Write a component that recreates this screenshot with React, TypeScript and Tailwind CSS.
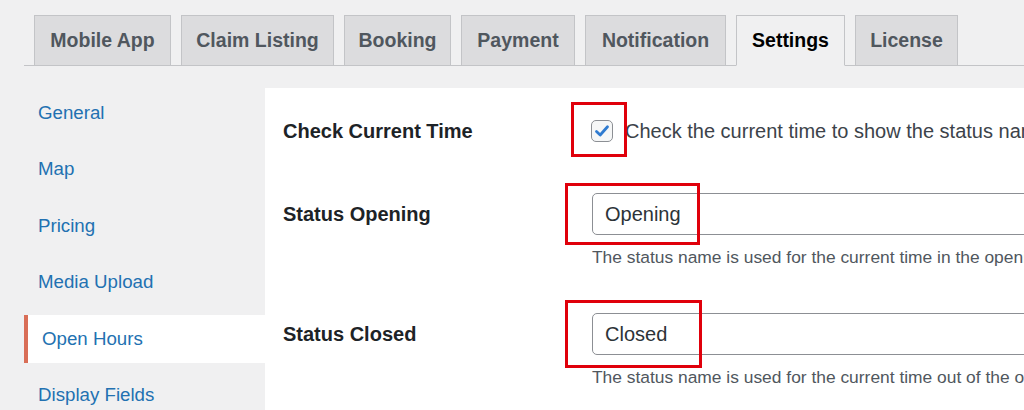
const tabs = [
  { label: "Mobile App", w: "w-[137px]" },
  { label: "Claim Listing", w: "w-[153px]" },
  { label: "Booking", w: "w-[107px]" },
  { label: "Payment", w: "w-[114px]" },
  { label: "Notification", w: "w-[141px]" },
  { label: "Settings", w: "w-[109px]", active: true },
  { label: "License", w: "w-[103px]" },
];

const menu = ["General", "Map", "Pricing", "Media Upload", "Open Hours", "Display Fields"];

export default function App() {
  return (
    <div className="w-[1024px] h-[410px] overflow-hidden bg-[#f0f0f1] font-['Liberation_Sans',Arial,sans-serif]">
      {/* TABS */}
      <div className="ml-[24px] pl-[10px] pt-[15px] flex items-end gap-[10px] border-b border-[#c3c4c7]">
        {tabs.map((t) => (
          <div
            key={t.label}
            className={`${t.w} h-[51px] -mb-px flex items-center justify-center border border-[#c3c4c7] text-[19.5px] font-bold ${
              t.active ? "bg-[#f0f0f1] border-b-[#f0f0f1] text-black" : "bg-[#dcdcde] text-[#50575e]"
            }`}
          >
            {t.label}
          </div>
        ))}
      </div>

      <div className="mt-[22px] pl-[24px] flex h-[400px]">
        {/* SIDEBAR */}
        <div className="w-[241px] shrink-0 pt-[1px] flex flex-col gap-[8.4px]">
          {menu.map((m) =>
            m === "Open Hours" ? (
              <div key={m} className="h-[48px] flex items-center bg-white border-l-4 border-[#d96e57] pl-[14px] text-[18.7px] text-[#2271b1]">
                {m}
              </div>
            ) : (
              <div key={m} className="h-[48px] flex items-center pl-[14px] text-[18.7px] text-[#2271b1]">
                {m}
              </div>
            )
          )}
        </div>

        {/* CONTENT */}
        <div className="flex-1 min-w-0 overflow-hidden bg-white pl-[18px] pt-[32px]">
          <div className="flex items-center h-[22px]">
            <div className="w-[308px] shrink-0 text-[20px] font-bold text-[#1d2327]">Check Current Time</div>
            <div className="relative shrink-0">
              <div className="w-[22px] h-[22px] rounded-[5px] border border-[#8c8f94] bg-[#f6f7f7] flex items-center justify-center">
                <svg width="18" height="18" viewBox="0 0 18 18">
                  <path d="M3.5 9.5 L7.2 13 L14.5 4.8" fill="none" stroke="#2f7bd0" strokeWidth="2.8" strokeLinecap="round" strokeLinejoin="round" />
                </svg>
              </div>
              <div className="absolute left-[-20px] top-[-18px] w-[56px] h-[55px] border-[3px] border-[#e0000b]" />
            </div>
            <div className="ml-[12px] whitespace-nowrap text-[20px] text-[#3c434a]">
              Check the current time to show the status name
            </div>
          </div>

          <div className="mt-[51px] flex items-center">
            <div className="w-[309px] shrink-0 text-[20px] font-bold text-[#1d2327]">Status Opening</div>
            <div className="relative shrink-0">
              <div className="w-[520px] h-[42px] rounded-[5px] border border-[#8c8f94] pl-[12px] flex items-center text-[20px] text-[#2c3338]">
                Opening
              </div>
              <div className="absolute left-[-27px] top-[-10px] w-[135px] h-[62px] border-[3px] border-[#e0000b]" />
            </div>
          </div>
          <div className="ml-[309px] mt-[11px] leading-[22px] whitespace-nowrap text-[17.4px] text-[#50575e]">
            The status name is used for the current time in the opening hours.
          </div>

          <div className="mt-[45px] flex items-center">
            <div className="w-[309px] shrink-0 text-[20px] font-bold text-[#1d2327]">Status Closed</div>
            <div className="relative shrink-0">
              <div className="w-[520px] h-[42px] rounded-[5px] border border-[#8c8f94] pl-[12px] flex items-center text-[20px] text-[#2c3338]">
                Closed
              </div>
              <div className="absolute left-[-27px] top-[-13px] w-[137px] h-[68px] border-[3px] border-[#e0000b]" />
            </div>
          </div>
          <div className="ml-[309px] mt-[11px] leading-[22px] whitespace-nowrap text-[17.4px] text-[#50575e]">
            The status name is used for the current time out of the opening hours.
          </div>
        </div>
      </div>
    </div>
  );
}
